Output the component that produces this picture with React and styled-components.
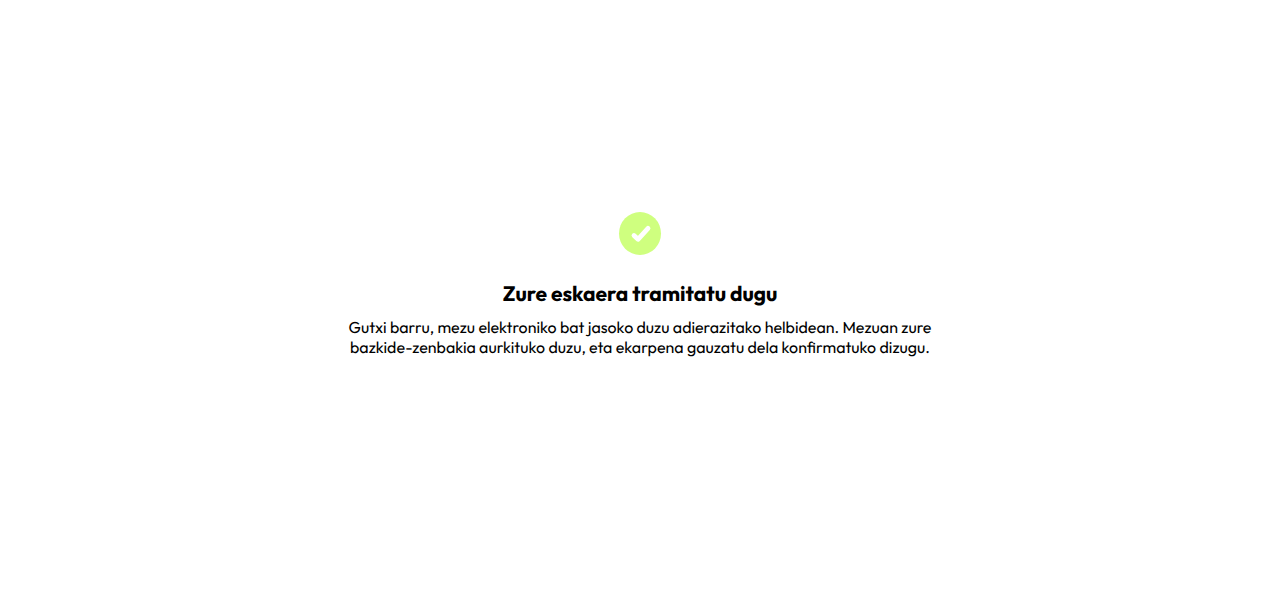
import React from "react";
import styled, { createGlobalStyle } from "styled-components";

const GlobalStyle = createGlobalStyle`
  * { box-sizing: border-box; }
  body {
    margin: 0;
    background: #fff;
    color: #000;
    font-family: Outfit, Lato, "Liberation Sans", sans-serif;
    text-rendering: geometricPrecision;
  }
`;

const Page = styled.main`
  min-height: 100vh;
  display: flex;
  flex-direction: column;
  align-items: center;
  justify-content: center;
  padding: 0 16px 46px;
`;

const Message = styled.section`
  width: 100%;
  max-width: 640px;
  display: flex;
  flex-direction: column;
  align-items: center;
  text-align: center;
`;

const StatusIcon = styled.svg`
  width: 44px;
  height: 44px;
  margin-bottom: 24px;
`;

const Title = styled.h1`
  margin: 0 0 9px;
  font-size: 21px;
  line-height: 30px;
  font-weight: 700;
`;

const Text = styled.p`
  margin: 0;
  font-size: 16px;
  line-height: 20px;
  font-weight: 400;
`;

export default function App() {
  return (
    <>
      <GlobalStyle />
      <Page>
        <Message>
          <StatusIcon viewBox="0 0 44 44" aria-hidden="true">
            <ellipse cx="22" cy="22.5" rx="21" ry="21.5" fill="#cfff7f" />
            <path d="M16 24.5 L20 28.3 L30 17.3" fill="none" stroke="#fff" strokeWidth="4.8" strokeLinecap="round" strokeLinejoin="round" />
          </StatusIcon>
          <Title>Zure eskaera tramitatu dugu</Title>
          <Text>
            Gutxi barru, mezu elektroniko bat jasoko duzu adierazitako helbidean. Mezuan zure
            bazkide-zenbakia aurkituko duzu, eta ekarpena gauzatu dela konfirmatuko dizugu.
          </Text>
        </Message>
      </Page>
    </>
  );
}
